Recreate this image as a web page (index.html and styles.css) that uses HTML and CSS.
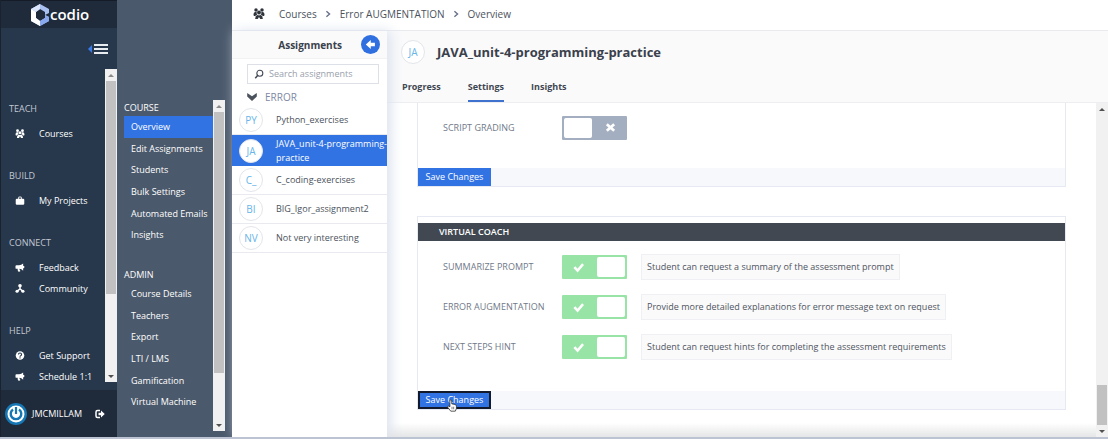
FILE: index.html
```html
<!DOCTYPE html>
<html lang="en">
<head>
<meta charset="utf-8">
<title>Codio - JAVA_unit-4-programming-practice</title>
<link rel="stylesheet" href="styles.css">
</head>
<body>
<svg class="defs" aria-hidden="true">
  <symbol id="users" viewBox="0 0 24 22">
    <circle cx="6" cy="4" r="3.500"/><circle cx="18" cy="4" r="3.500"/><circle cx="12" cy="9" r="3.800"/>
    <path d="M1 14q0-6 4-6h2.500q-1 4 1.500 5-4 1-4.500 3H2zM23 14q0-6-4-6h-2.500q1 4-1.500 5 4 1 4.500 3H22zM4.500 22q-.5-7 4.500-8 3 1.500 6 0 5 1 4.500 8h-5L12 18l-2.500 4z"/>
  </symbol>
  <symbol id="bag" viewBox="0 0 20 20">
    <path d="M6 6V4q0-3 4-3t4 3v2h3q2.500 0 2.500 2.500V17q0 2.500-2.500 2.500H3Q.5 19.500.5 17V8.500Q.5 6 3 6zm2 0h4V4.500q0-1.500-2-1.500t-2 1.500z"/>
  </symbol>
  <symbol id="horn" viewBox="0 0 20 20">
    <path d="M17 1v5q3 1 3 3t-3 3v5q-4-4-8-4-1 2 2 5-2 2-5 1-2-3-1-6H2q-2 0-2-2V7q0-2 2-2h6q5 0 9-4z"/>
  </symbol>
  <symbol id="network" viewBox="0 0 20 20">
    <circle cx="10" cy="4" r="4"/><circle cx="3.500" cy="16" r="3.500"/><circle cx="16.500" cy="16" r="3.500"/>
    <path d="M8.500 5h3v5l6 5-2 2.500-5.500-5-5.500 5L2.500 15l6-5z"/>
  </symbol>
  <symbol id="chevron" viewBox="0 0 10 10">
    <path d="M2 1l4.500 4L2 9" fill="none" stroke="currentColor" stroke-width="2"/>
  </symbol>
  <symbol id="check" viewBox="0 0 12 12">
    <path d="M1.500 5.500L5 9.300l6-7" fill="none" stroke="currentColor" stroke-width="2.800"/>
  </symbol>
  <symbol id="cross" viewBox="0 0 12 12">
    <path d="M2 2.500l8 7M10 2.500l-8 7" fill="none" stroke="currentColor" stroke-width="3"/>
  </symbol>
</svg>

<div class="app">
  <aside class="sidebar">
    <div class="brand">
      <svg class="brand-mark" viewBox="0 0 20 22" aria-hidden="true">
        <path d="M10 0L1 5v12l9 5 9-5v-4l-4-2v3l-5 3-4-3V8l4-3 5 3v3l4-2V5z" fill="#a9c0f2"/>
        <path d="M1 5l5 3v6l4 3v5l-9-5z" fill="#fff"/>
        <path d="M10 17l5-3v-3l4 2v4l-9 5z" fill="#89a8ee"/>
        <path d="M10 0L1 5l5 3 4-3z" fill="#dbe5fb"/>
      </svg>
      <span>codio</span>
    </div>
    <div class="collapse">
      <button class="collapse-btn" aria-label="Collapse menu">
        <svg viewBox="0 0 20 12"><path d="M4 2v8L0 6z" fill="#3b7be8"/><path d="M6 2h14M6 6h14M6 10h14" stroke="#e8ebf0" stroke-width="1.800"/></svg>
      </button>
    </div>
    <div class="side-scroll">
      <nav class="side-nav">
        <section><h2>TEACH</h2>
          <a href="#"><svg><use href="#users"/></svg>Courses</a></section>
        <section><h2>BUILD</h2>
          <a href="#"><svg><use href="#bag"/></svg>My Projects</a></section>
        <section><h2>CONNECT</h2>
          <a href="#"><svg><use href="#horn"/></svg>Feedback</a>
          <a href="#"><svg><use href="#network"/></svg>Community</a></section>
        <section><h2>HELP</h2>
          <a href="#"><svg viewBox="0 0 20 20"><circle cx="10" cy="10" r="9.500"/><path d="M6.500 8q0-3.500 3.500-3.500T13.500 8q0 1.500-2 2.500-1.500.7-1.500 2M10 14v2.500" fill="none" stroke="#27374c" stroke-width="2.400"/></svg>Get Support</a>
          <a href="#"><svg><use href="#horn"/></svg>Schedule 1:1</a></section>
      </nav>
      <div class="bar bar-side"><i class="up"></i><b></b><i class="down"></i></div>
    </div>
    <div class="account">
      <svg class="avatar" viewBox="0 0 22 22" aria-hidden="true"><circle cx="11" cy="11" r="11" fill="#1677b5"/><circle cx="11" cy="11" r="8.500" fill="#fff"/><path d="M8 6.500a5.300 5.300 0 1 0 6 0" fill="none" stroke="#1677b5" stroke-width="2.400"/><path d="M11 4v7" stroke="#1677b5" stroke-width="2.200"/></svg>
      <span>JMCMILLAM</span>
      <button class="logout" aria-label="Log out"><svg viewBox="0 0 20 20"><path d="M10 3H5Q2 3 2 6v8q0 3 3 3h5" fill="none" stroke="#fff" stroke-width="3"/><path d="M7 7.500h5V3l7.500 7-7.500 7v-4.500H7z" fill="#fff"/></svg></button>
    </div>
  </aside>

  <aside class="submenu">
    <nav class="sub-nav">
      <h2>COURSE</h2>
      <ul>
        <li><a class="current" href="#">Overview</a></li>
        <li><a href="#">Edit Assignments</a></li>
        <li><a href="#">Students</a></li>
        <li><a href="#">Bulk Settings</a></li>
        <li><a href="#">Automated Emails</a></li>
        <li><a href="#">Insights</a></li>
      </ul>
      <h2>ADMIN</h2>
      <ul>
        <li><a href="#">Course Details</a></li>
        <li><a href="#">Teachers</a></li>
        <li><a href="#">Export</a></li>
        <li><a href="#">LTI / LMS</a></li>
        <li><a href="#">Gamification</a></li>
        <li><a href="#">Virtual Machine</a></li>
      </ul>
    </nav>
    <div class="bar bar-sub"><i class="up"></i><b></b><i class="down"></i></div>
  </aside>

  <div class="main">
    <nav class="crumbs" aria-label="Breadcrumb">
      <svg class="crumb-icon"><use href="#users"/></svg>
      <a href="#">Courses</a><svg class="sep"><use href="#chevron"/></svg>
      <a href="#">Error AUGMENTATION</a><svg class="sep"><use href="#chevron"/></svg>
      <a href="#">Overview</a>
    </nav>
    <div class="work">
      <section class="assignments">
        <header>
          <h2>Assignments</h2>
          <button class="back" aria-label="Back"><svg viewBox="0 0 20 20"><path d="M1.500 10L10.500 2v5H18v6h-7.500v5z" fill="#fff"/></svg></button>
        </header>
        <label class="search">
          <svg viewBox="0 0 12 12" aria-hidden="true"><circle cx="7" cy="5" r="3.600" fill="none" stroke="#444a55" stroke-width="1.300"/><path d="M4.600 7.500L1.500 11" stroke="#444a55" stroke-width="1.800"/></svg>
          <input type="text" placeholder="Search assignments" aria-label="Search assignments">
        </label>
        <h3 class="group"><svg viewBox="0 0 12 10" aria-hidden="true"><path d="M0 0l6 4 6-4v4.500L6 10 0 4.500z" fill="#4b525c"/></svg>ERROR</h3>
        <ul class="items">
          <li><a href="#"><span class="badge">PY</span>Python_exercises</a></li>
          <li><a class="selected" href="#"><span class="badge">JA</span>JAVA_unit-4-programming-practice</a></li>
          <li><a href="#"><span class="badge">C_</span>C_coding-exercises</a></li>
          <li><a href="#"><span class="badge">BI</span>BIG_Igor_assignment2</a></li>
          <li><a href="#"><span class="badge">NV</span>Not very interesting</a></li>
        </ul>
      </section>

      <section class="detail">
        <header class="detail-head">
          <div class="title"><span class="badge">JA</span><h1>JAVA_unit-4-programming-practice</h1></div>
          <nav class="tabs"><a href="#">Progress</a><a class="active" href="#">Settings</a><a href="#">Insights</a></nav>
        </header>
        <div class="detail-body">
          <div class="panels">
            <form class="panel panel-cut">
              <div class="rows">
                <div class="row">
                  <label for="grading">SCRIPT GRADING</label>
                  <span class="switch"><input type="checkbox" id="grading"><svg><use href="#cross"/></svg></span>
                </div>
              </div>
              <div class="panel-foot"><button type="button" class="save">Save Changes</button></div>
            </form>
            <form class="panel">
              <h2>VIRTUAL COACH</h2>
              <div class="rows">
                <div class="row">
                  <label for="summarize">SUMMARIZE PROMPT</label>
                  <span class="switch"><input type="checkbox" id="summarize" checked><svg><use href="#check"/></svg></span>
                  <p class="tip">Student can request a summary of the assessment prompt</p>
                </div>
                <div class="row">
                  <label for="augment">ERROR AUGMENTATION</label>
                  <span class="switch"><input type="checkbox" id="augment" checked><svg><use href="#check"/></svg></span>
                  <p class="tip">Provide more detailed explanations for error message text on request</p>
                </div>
                <div class="row">
                  <label for="hint">NEXT STEPS HINT</label>
                  <span class="switch"><input type="checkbox" id="hint" checked><svg><use href="#check"/></svg></span>
                  <p class="tip">Student can request hints for completing the assessment requirements</p>
                </div>
              </div>
              <div class="panel-foot">
                <button type="button" class="save focused">Save Changes</button>
                <svg class="pointer" viewBox="0 0 12 15" aria-hidden="true"><path d="M3.500 9V2q0-1.300 1.100-1.300T5.700 2v3.500l4 .8q1.600.4 1.600 2V11l-1.300 3.300H4.500L1 9.800q-.7-1 .2-1.500t2.300.7z" fill="#fff" stroke="#222" stroke-width=".9"/><path d="M6 9v3M8 9v3" stroke="#222" stroke-width=".7"/></svg>
              </div>
            </form>
          </div>
          <div class="bar bar-main"><i class="up"></i><b></b><i class="down"></i></div>
        </div>
      </section>
    </div>
  </div>
</div>
</body>
</html>
```
FILE: styles.css
```css
* { box-sizing: border-box; }
body {
  margin: 0;
  font: 9px/12px "Open Sans", "Noto Sans", sans-serif;
  color: #4b525c;
  background: #fff;
}
h1, h2, h3, p, ul { margin: 0; padding: 0; font-size: inherit; font-weight: 400; }
ul { list-style: none; }
a { color: inherit; text-decoration: none; }
button { border: 0; padding: 0; background: none; font: inherit; color: inherit; cursor: pointer; }
svg { display: block; flex: none; fill: currentColor; }
.defs { position: absolute; width: 0; height: 0; }

.app {
  display: flex;
  height: 100vh;
  border-bottom: 2px solid #bcc3d3;
  overflow: hidden;
}

/* Drawn scroll bars */
.bar { display: flex; flex-direction: column; flex: none; width: 12px; background: #f1f1f1; }
.bar i { flex: none; height: 12px; display: grid; place-items: center; }
.bar i::before { content: ""; border: 3px solid transparent; }
.bar .up::before { border-top: 0; border-bottom-color: #8b8b8b; }
.bar .down { margin-top: auto; }
.bar .down::before { border-bottom: 0; border-top-color: #505050; }
.bar b { margin: 0 1px; background: #c1c1c1; }
.bar-side b { flex: 0 0 68%; }
.bar-sub b { flex: 0 0 79%; }
.bar-main b { flex: 0 0 12%; margin-top: auto; }
.bar-main .down { margin-top: 0; }
.bar-main .up::before { border-bottom-color: #505050; }

/* Primary sidebar */
.sidebar {
  display: flex;
  flex-direction: column;
  flex: none;
  width: 117px;
  border-left: 1px solid #1a2230;
  background: #27374c;
  color: #fff;
}
.brand {
  display: flex;
  align-items: center;
  height: 28px;
  padding-left: 29px;
  background: #1f2a3a;
  border-top: 1px solid #151c28;
  font-size: 15px;
  font-weight: 600;
  line-height: 20px;
}
.brand-mark { width: 20px; height: 22px; }
.brand span { padding-bottom: 2px; }
.collapse { display: flex; justify-content: flex-end; align-items: center; height: 41px; padding-right: 9px; }
.collapse-btn svg { width: 20px; height: 12px; }
.side-scroll { display: flex; flex: 1; min-height: 0; margin-bottom: 8px; }
.side-nav { flex: 1; padding-top: 30px; }
.side-nav section { margin-bottom: 22px; }
.side-nav h2 { margin-bottom: 4px; padding-left: 8px; line-height: 20px; color: #c3c9d2; }
.side-nav a { display: flex; align-items: center; gap: 14px; height: 21px; padding-left: 14px; white-space: nowrap; }
.side-nav svg { width: 10px; height: 9px; }
.account {
  display: flex;
  align-items: center;
  height: 47px;
  padding: 0 12px 0 4px;
  background: #1f2a3b;
}
.avatar { width: 22px; height: 22px; margin-right: 5px; }
.logout { margin-left: auto; }
.logout svg { width: 10px; height: 10px; }

/* Course menu */
.submenu {
  display: flex;
  flex: none;
  width: 115px;
  padding: 100px 7px 6px;
  background: #4b596c;
  color: #fff;
}
.sub-nav { flex: 1; font-weight: 500; white-space: nowrap; }
.sub-nav h2 { line-height: 16px; font-weight: 500; }
.sub-nav ul { display: flex; flex-direction: column; height: 130px; margin-bottom: 21px; }
.sub-nav li { flex: 1; display: flex; }
.sub-nav a { flex: 1; display: flex; align-items: center; padding-left: 7px; }
.sub-nav .current { background: #3273e4; }

/* Main area */
.main { display: flex; flex-direction: column; flex: 1; min-width: 0; }
.crumbs {
  display: flex;
  align-items: center;
  gap: 8px;
  height: 31px;
  padding: 0 21px 3px;
  border-bottom: 1px solid #e9eaee;
  font-size: 10px;
  line-height: 14px;
}
.crumb-icon { width: 12px; height: 11px; margin-right: 6px; color: #2e333b; }
.sep { width: 7px; height: 8px; color: #67718a; }
.work { display: flex; flex: 1; min-height: 0; }

.assignments { flex: none; width: 155px; box-shadow: 4px 0 12px #dbe2ee; z-index: 1; background: #fff; }
.assignments header {
  display: flex;
  align-items: center;
  justify-content: flex-end;
  gap: 19px;
  height: 28px;
  padding-right: 7px;
  background: #fafafb;
  border-bottom: 1px solid #f1f2f4;
}
.assignments h2 { font-size: 10px; font-weight: 700; line-height: 16px; color: #3a414c; }
.back { display: grid; place-items: center; width: 19px; height: 19px; border-radius: 50%; background: #2f6fe0; }
.back svg { width: 11px; height: 11px; }
.search {
  display: flex;
  align-items: center;
  gap: 5px;
  height: 20px;
  margin: 5px 8px 4px 15px;
  padding-left: 6px;
  border: 1px solid #dde0e7;
}
.search svg { width: 10px; height: 10px; }
.search input { flex: 1; min-width: 0; border: 0; padding: 0; outline: 0; background: none; font: inherit; }
.search input::placeholder { color: #99a0ac; opacity: 1; }
.group { display: flex; align-items: center; gap: 8px; height: 18px; padding-left: 15px; font-size: 10px; color: #8089a4; }
.group svg { width: 10px; height: 8px; }
.items a {
  display: flex;
  align-items: center;
  gap: 13px;
  min-height: 29px;
  padding-left: 7px;
  border-bottom: 1px solid #e8eaef;
  overflow-wrap: anywhere;
}
.items .selected { min-height: 31px; border: 0; background: #3273e4; color: #fff; line-height: 14px; }
.badge {
  display: grid;
  place-items: center;
  flex: none;
  width: 24px;
  height: 24px;
  border: 1px solid #e2e5ea;
  border-radius: 50%;
  background: #fff;
  color: #68b5ea;
  font-size: 10px;
  line-height: 14px;
}

.detail { display: flex; flex-direction: column; flex: 1; min-width: 0; }
.detail-head { padding: 9px 15px 0 14px; background: #fafafb; border-bottom: 1px solid #eceef2; }
.title { display: flex; align-items: center; gap: 12px; height: 24px; }
.title h1 { font-size: 13px; font-weight: 700; line-height: 20px; color: #3a414c; }
.tabs { display: flex; gap: 27px; margin-top: 13px; padding-left: 1px; font-size: 9px; font-weight: 700; color: #3f4651; }
.tabs a { height: 25px; padding-top: 4px; border-bottom: 2px solid transparent; }
.tabs .active { border-color: #3f72cf; }
.detail-body {
  display: flex;
  flex: 1;
  min-height: 0;
  background: linear-gradient(to top, #e4e5e6, #fff 14px);
}
.panels { flex: 1; min-width: 0; padding: 0 30px; }
.panel { border: 1px solid #e6e9f2; margin-bottom: 29px; background: #fff; }
.panel-cut { border-top: 0; }
.panel h2 { margin-top: 6px; padding-left: 21px; background: #414852; color: #fff; font-weight: 600; line-height: 18px; }
.rows { display: grid; gap: 14px; padding: 13px 25px 31px; }
.panel-cut .rows { padding: 12px 25px 28px; }
.row { display: grid; grid-template-columns: 119px 65px 1fr; align-items: center; min-height: 25px; color: #717989; }
.switch { display: grid; align-items: center; color: #fff; }
.switch input {
  grid-area: 1 / 1;
  appearance: none;
  width: 65px;
  height: 24px;
  margin: 0;
  padding: 2px;
  border-radius: 1px;
  background: #a3afc1;
}
.switch input::before { content: ""; display: block; width: 28px; height: 20px; border-radius: 2px; background: #fff; }
.switch input:checked { background: #98e3a6; }
.switch input:checked::before { margin-left: auto; }
.switch svg { grid-area: 1 / 1; width: 11px; height: 11px; margin-left: 43px; pointer-events: none; }
.switch input:checked + svg { margin-left: 11px; }
.tip {
  justify-self: start;
  margin-left: 14px;
  padding: 6px 5px;
  border: 1px solid #eff0f3;
  background: #fafafb;
  color: #4e545e;
}
.panel-foot { position: relative; display: flex; height: 18px; background: #f7f8fb; }
.save { width: 73px; background: #3273e4; color: #fff; }
.save.focused { outline: 2px solid #121a2b; outline-offset: -2px; }
.pointer { position: absolute; left: 29px; top: 8px; width: 10px; height: 13px; }
```
